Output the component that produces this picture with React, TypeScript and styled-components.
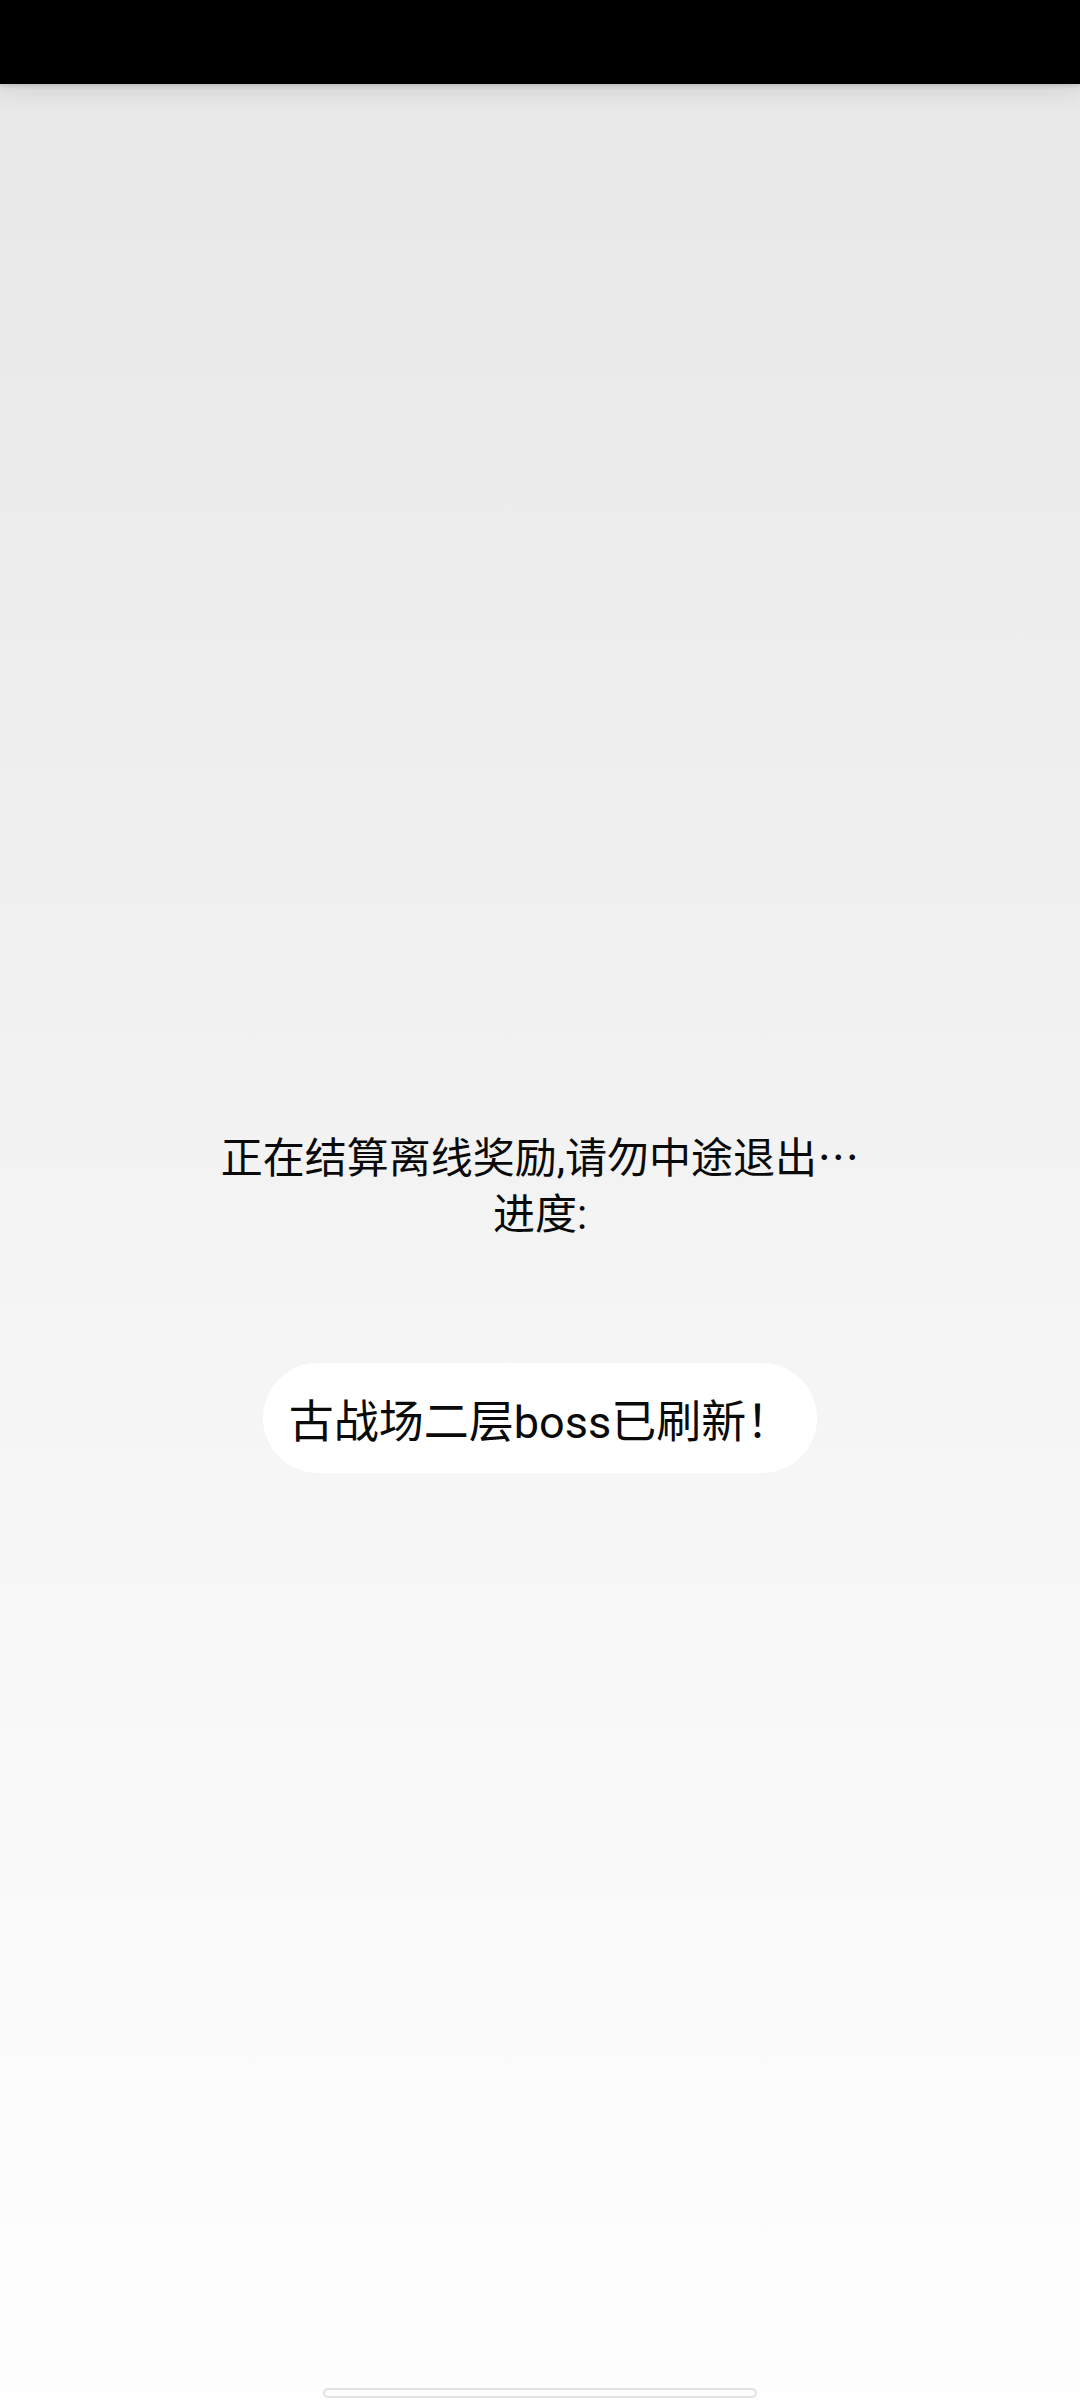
import React from "react";
import styled, { createGlobalStyle } from "styled-components";

const Global = createGlobalStyle`
  html, body { margin: 0; padding: 0; background: #fefefe; }
  body { font-family: Roboto, "Noto Sans CJK SC", "Noto Sans", sans-serif; }
`;

const Screen = styled.div`
  width: 1080px;
  height: 2400px;
  display: flex;
  flex-direction: column;
  background: linear-gradient(to bottom, #e7e7e7 0%, #e8e8e8 5%, #f2f2f2 45%, #f8f8f8 70%, #fefefe 100%);
  overflow: hidden;
`;

const StatusBar = styled.div`
  height: 84px;
  flex: none;
  background: #000;
  position: relative;
  z-index: 1;
  box-shadow: 0 2px 4px rgba(0, 0, 0, 0.12), 0 6px 22px rgba(0, 0, 0, 0.1);
`;

const Body = styled.main`
  flex: 1;
  display: flex;
  flex-direction: column;
  align-items: center;
  padding-top: 1043px;
`;

const Message = styled.p`
  margin: 0;
  font-size: 42px;
  line-height: 56px;
  color: #0a0a0a;
  text-align: center;
`;

const Ellipsis = styled.span`
  font-family: "Noto Sans CJK SC", sans-serif;
`;

const Toast = styled.div`
  margin-top: 120px;
  height: 110px;
  box-sizing: border-box;
  padding: 0 26px;
  display: inline-flex;
  align-items: center;
  background: #ffffff;
  border-radius: 55px;
  font-size: 45px;
  color: #0a0a0a;
  white-space: nowrap;
`;

const Spacer = styled.div`
  flex: 1;
`;

const HomeHandle = styled.div`
  align-self: center;
  width: 434px;
  height: 10px;
  box-sizing: border-box;
  margin-bottom: 2px;
  border: 2px solid #e2e2e2;
  border-radius: 5px;
  background: #fdfdfd;
`;

export default function App() {
  return (
    <>
      <Global />
      <Screen>
        <StatusBar />
        <Body>
          <Message>
            正在结算离线奖励,请勿中途退出<Ellipsis>⋯</Ellipsis>
            <br />
            进度:
          </Message>
          <Toast>古战场二层boss已刷新！</Toast>
          <Spacer />
          <HomeHandle />
        </Body>
      </Screen>
    </>
  );
}
